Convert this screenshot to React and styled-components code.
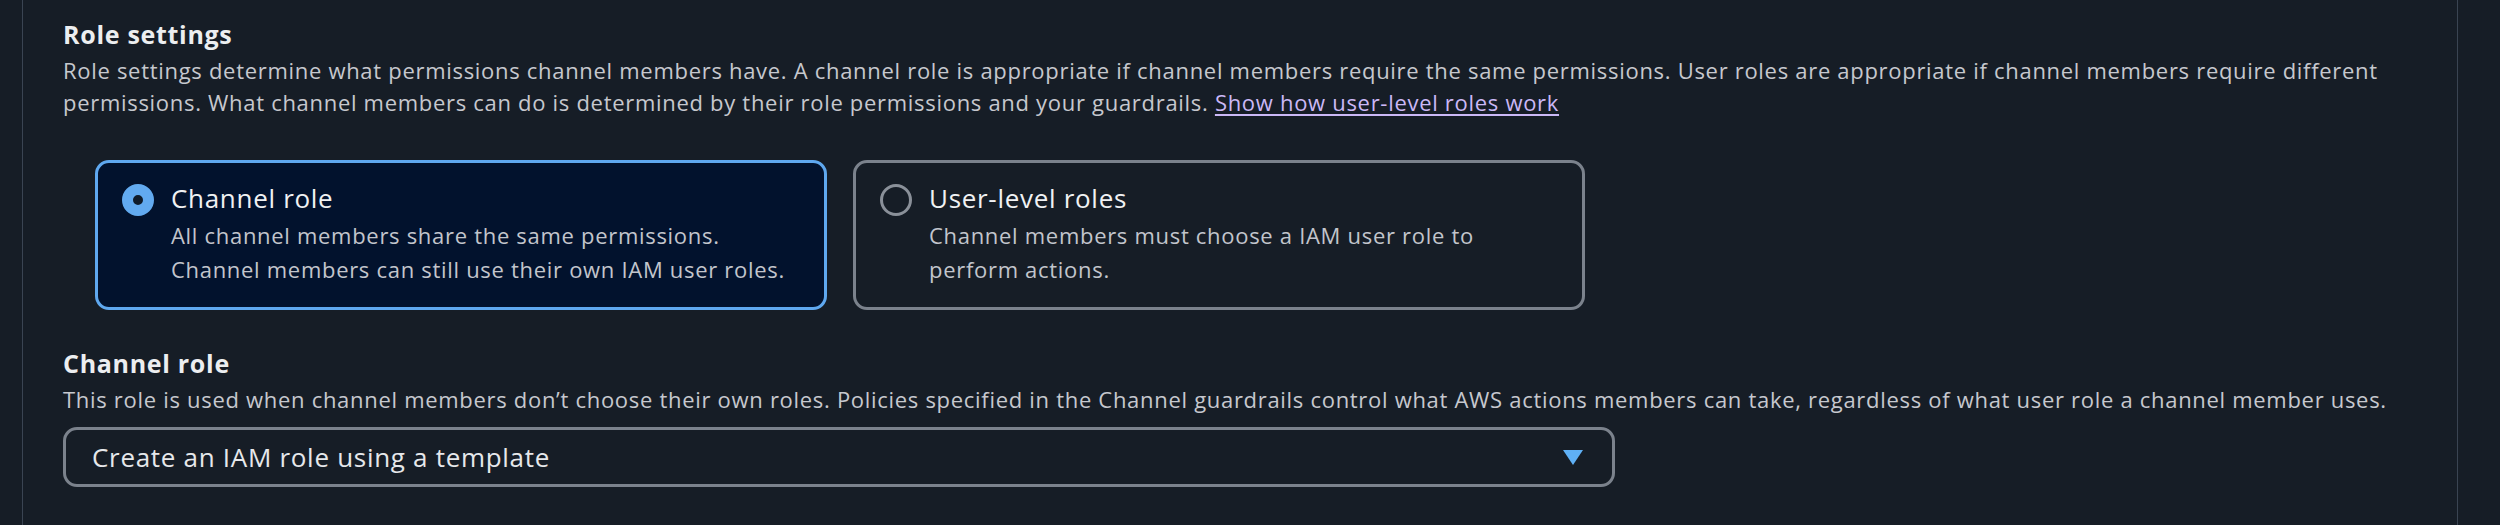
import React from "react";
import styled, { createGlobalStyle } from "styled-components";

const GlobalStyle = createGlobalStyle`
  body {
    margin: 0;
    background: #161d26;
    font-family: "Open Sans", Lato, "Liberation Sans", sans-serif;
    letter-spacing: 0.7px;
  }
`;

const options = [
  {
    id: "channel",
    title: "Channel role",
    lines: [
      "All channel members share the same permissions.",
      "Channel members can still use their own IAM user roles.",
    ],
  },
  {
    id: "user",
    title: "User-level roles",
    lines: ["Channel members must choose a IAM user role to", "perform actions."],
  },
];

const App = () => {
  const selected = "channel";

  return (
    <>
      <GlobalStyle />
      <Frame>
        <Heading>Role settings</Heading>
        <Description>
          Role settings determine what permissions channel members have. A
          channel role is appropriate if channel members require the same
          permissions. User roles are appropriate if channel members require
          different permissions. What channel members can do is determined by
          their role permissions and your guardrails.{" "}
          <Link href="#">Show how user-level roles work</Link>
        </Description>

        <Tiles>
          {options.map((opt) => (
            <Tile key={opt.id} $active={opt.id === selected}>
              <Radio $active={opt.id === selected} />
              <TileText>
                <TileTitle>{opt.title}</TileTitle>
                {opt.lines.map((l) => (
                  <TileLine key={l}>{l}</TileLine>
                ))}
              </TileText>
            </Tile>
          ))}
        </Tiles>

        <SubHeading>Channel role</SubHeading>
        <Description>
          This role is used when channel members don’t choose their own roles.
          Policies specified in the Channel guardrails control what AWS actions
          members can take, regardless of what user role a channel member uses.
        </Description>

        <Select>
          <span>Create an IAM role using a template</span>
          <Caret viewBox="0 0 20 15">
            <path d="M0 0 H20 L10 15 Z" fill="#5fb0f5" />
          </Caret>
        </Select>
      </Frame>
    </>
  );
};

export default App;

const Frame = styled.div`
  box-sizing: border-box;
  margin-left: 22px;
  width: 2436px;
  height: 525px;
  padding: 17px 0 0 40px;
  border-left: 1px solid #3a4452;
  border-right: 1px solid #3a4452;
`;

const Heading = styled.h2`
  margin: 0;
  font-size: 25px;
  line-height: 34px;
  font-weight: 700;
  color: #eceef0;
`;

const SubHeading = styled(Heading)`
  margin-top: 36px;
`;

const Description = styled.p`
  margin: 3px 0 0;
  max-width: 2360px;
  font-size: 22px;
  line-height: 32px;
  color: #c6c8ce;
`;

const Link = styled.a`
  color: #cbb8f6;
  text-decoration: underline;
  text-underline-offset: 3px;
`;

const Tiles = styled.div`
  display: flex;
  gap: 26px;
  margin: 42px 0 0 32px;
`;

const Tile = styled.div`
  box-sizing: border-box;
  display: flex;
  gap: 17px;
  width: 732px;
  height: 150px;
  padding: 17px 24px;
  border: 3px solid ${(p) => (p.$active ? "#5fa8ef" : "#7b828c")};
  border-radius: 14px;
  background: ${(p) => (p.$active ? "#02122d" : "transparent")};
`;

const Radio = styled.span`
  box-sizing: border-box;
  flex: none;
  width: 32px;
  height: 32px;
  margin-top: 4px;
  border-radius: 50%;
  background: ${(p) => (p.$active ? "#0f1b2a" : "transparent")};
  border: ${(p) => (p.$active ? "11px solid #62aaf0" : "3px solid #8a9099")};
`;

const TileText = styled.div`
  display: flex;
  flex-direction: column;
`;

const TileTitle = styled.div`
  font-size: 26px;
  line-height: 36px;
  color: #f0f1f3;
  margin-bottom: 2px;
`;

const TileLine = styled.div`
  font-size: 22px;
  line-height: 34px;
  color: #c2c5cc;
`;

const Select = styled.div`
  box-sizing: border-box;
  display: flex;
  align-items: center;
  justify-content: space-between;
  width: 1552px;
  height: 60px;
  margin-top: 12px;
  padding: 0 29px 0 26px;
  border: 3px solid #7b828c;
  border-radius: 14px;
  font-size: 26px;
  color: #e6e8eb;
`;

const Caret = styled.svg`
  width: 20px;
  height: 15px;
`;
